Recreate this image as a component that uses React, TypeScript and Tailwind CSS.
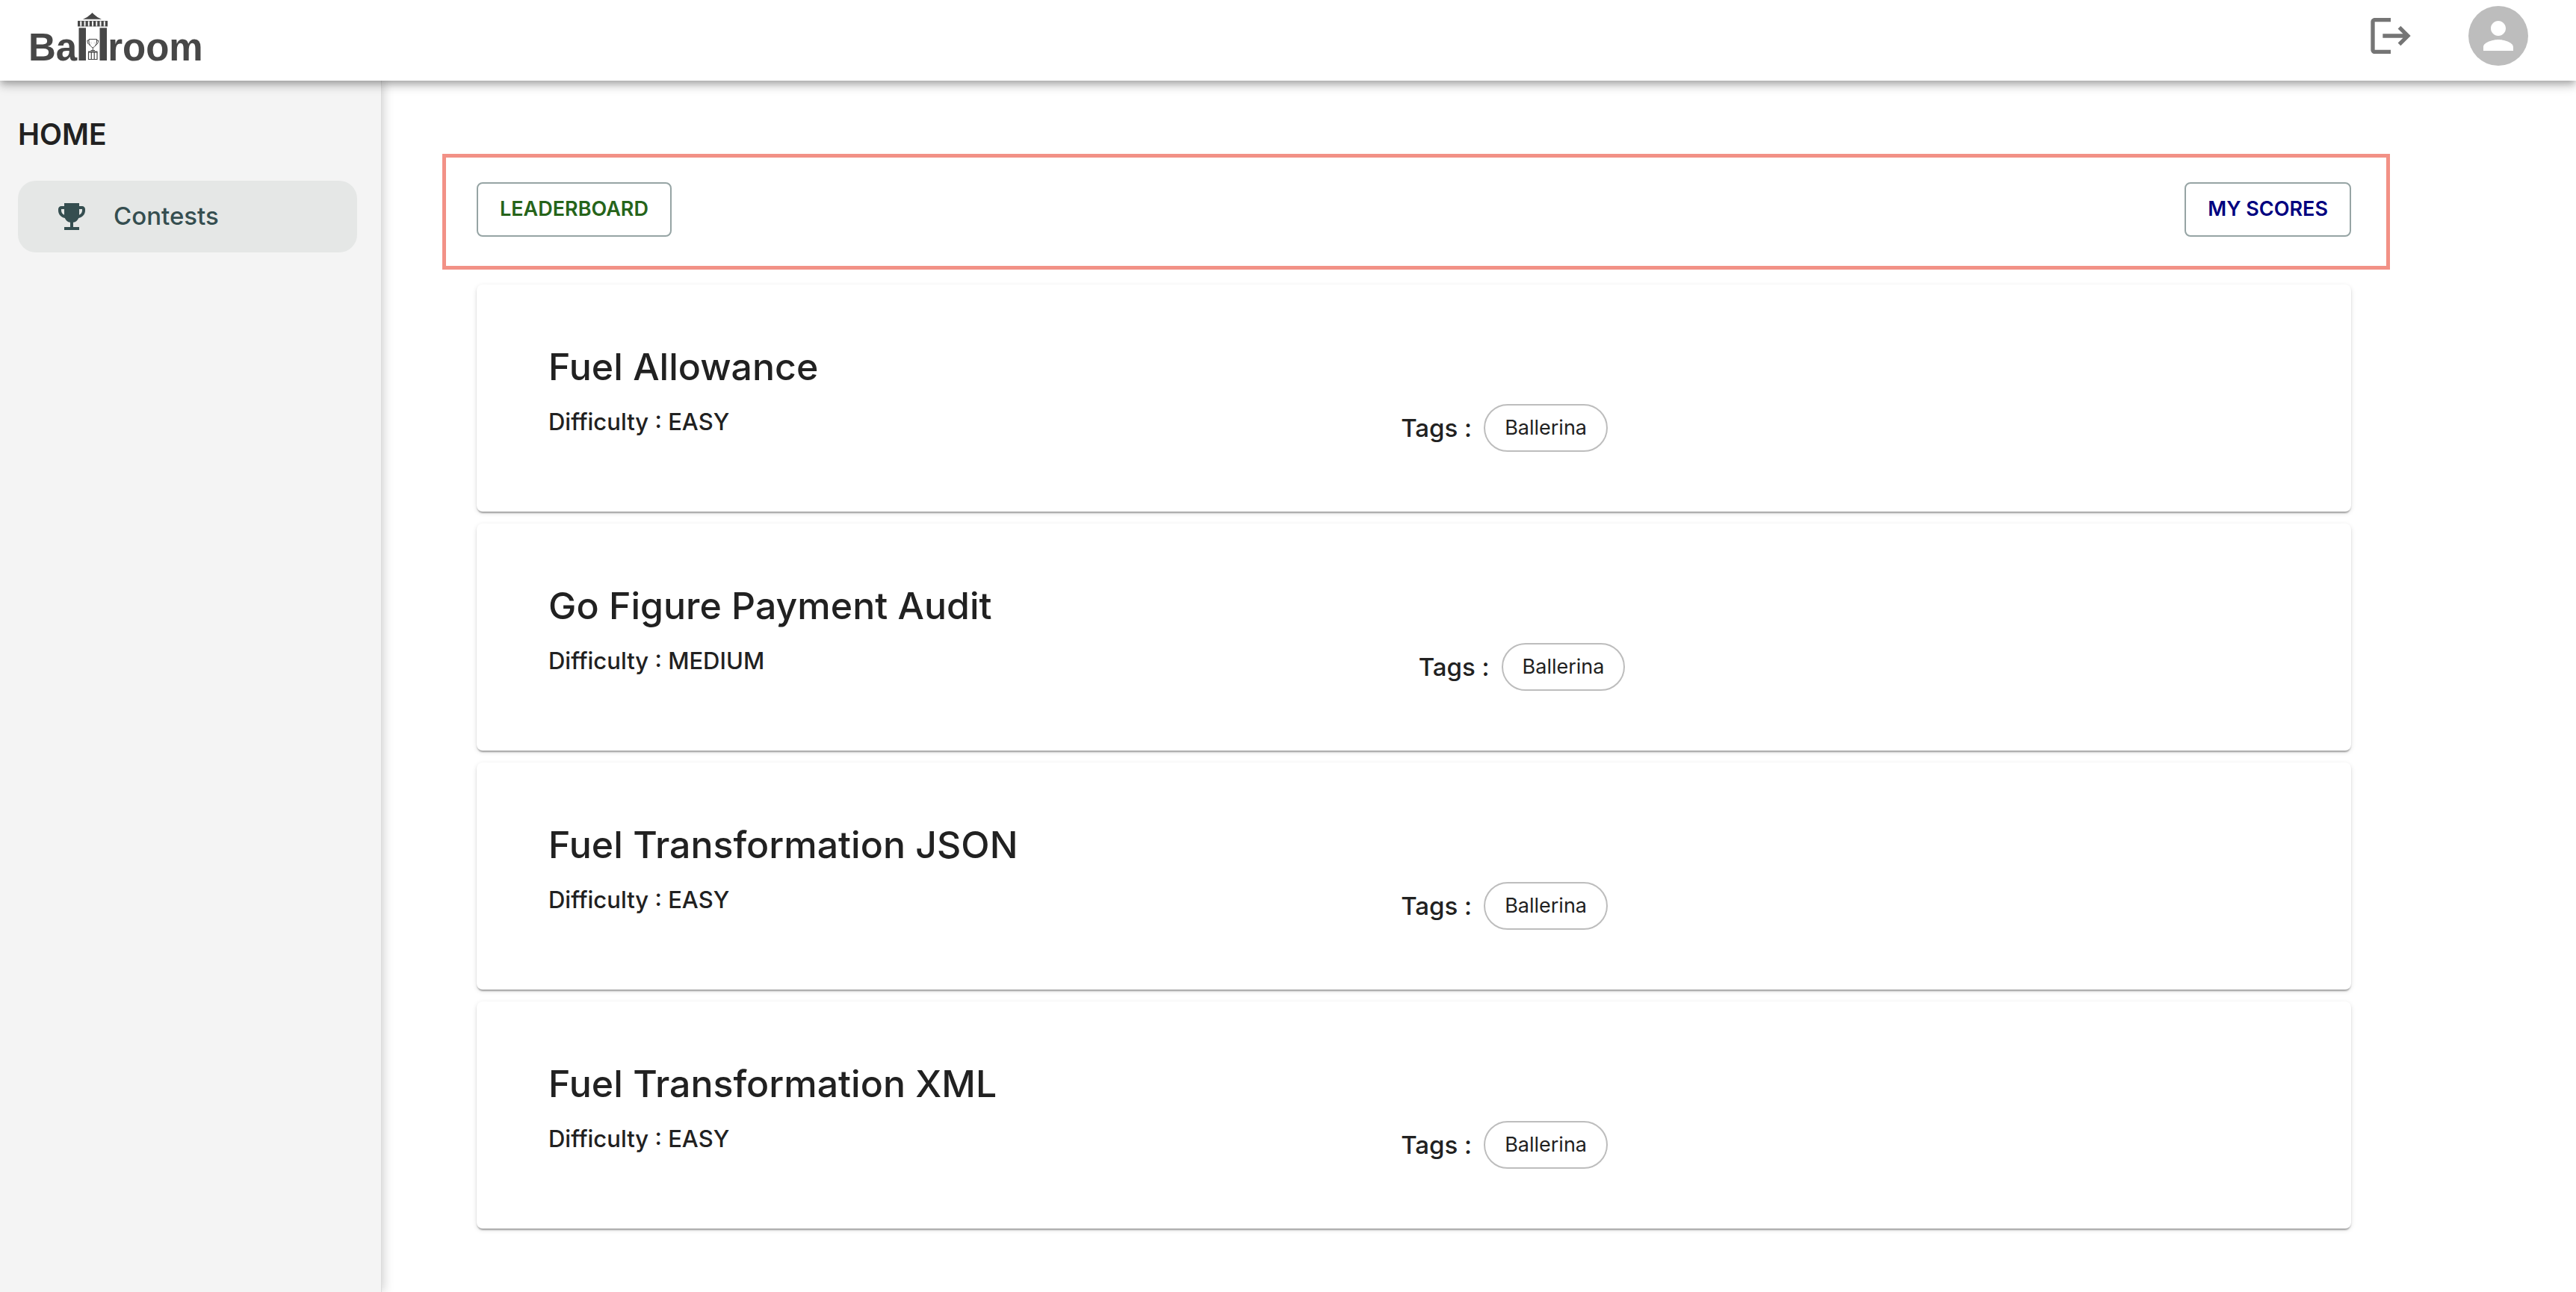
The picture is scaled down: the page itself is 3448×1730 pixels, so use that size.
import { MdEmojiEvents, MdLogout, MdPerson } from 'react-icons/md';

type Contest = { title: string; difficulty: string; tags: string[] };

const contests: Contest[] = [
  { title: 'Fuel Allowance', difficulty: 'EASY', tags: ['Ballerina'] },
  { title: 'Go Figure Payment Audit', difficulty: 'MEDIUM', tags: ['Ballerina'] },
  { title: 'Fuel Transformation JSON', difficulty: 'EASY', tags: ['Ballerina'] },
  { title: 'Fuel Transformation XML', difficulty: 'EASY', tags: ['Ballerina'] },
];

const crenels = [0, 1, 2, 3, 4, 5, 6, 7];

/* The two towers that stand for the "ll" of the logo, with a trophy between them. */
function Towers() {
  return (
    <svg viewBox="0 0 42 64" className="h-16 w-[42px] shrink-0" fill="#474747" aria-hidden="true">
      <path d="M20.500 0 L22.500 2 Q27 6.500 33 8.800 H8 Q14 6.500 18.500 2 Z" />
      {crenels.map((i) => (
        <rect key={i} x={1 + i * 5.25} y="11" width="3.300" height="7.300" />
      ))}
      <rect x="1" y="10.800" width="40" height="1" opacity="0.5" />
      <rect x="1" y="17.500" width="40" height="1" opacity="0.5" />
      <rect x="2.500" y="20.300" width="9.500" height="43.700" />
      <rect x="30.500" y="20.300" width="9.500" height="43.700" />
      <g fill="none" stroke="#474747" strokeWidth="1">
        <path d="M16 35.500 H26.500 V39 C26.500 43 24 45.500 21.300 47 C18.500 45.500 16 43 16 39 Z" />
        <path d="M16 37 H14 Q13.500 42 18 43.500 M26.500 37 H28.500 Q29 42 24.500 43.500" />
        <path d="M21.300 47 V50 M18.500 50.500 H24" />
        <path d="M19.500 39.500 L18.500 40.500 L19.500 41.500 M23 39.500 L24 40.500 L23 41.500" opacity="0.6" strokeWidth="0.600" />
      </g>
      <path d="M15 51.500 H27.500 V53.500 H15 Z" />
      <path
        d="M15.500 53 V62.500 H27 V53 M19.300 53 V62.500 M23.200 53 V62.500"
        fill="none"
        stroke="#474747"
        strokeWidth="1.200"
      />
    </svg>
  );
}

function Header() {
  return (
    <header className="relative z-10 flex h-[108px] items-start justify-between bg-white pr-16 pl-[38px] shadow-[0_4px_8px_-2px_rgba(0,0,0,0.2),0_8px_10px_0_rgba(0,0,0,0.14),0_2px_20px_0_rgba(0,0,0,0.12)]">
      <a
        href="#home"
        aria-label="Ballroom"
        className="flex items-baseline pt-[17px] font-['Liberation_Sans',Arial,sans-serif] text-[51px] leading-[44px] font-bold text-[#474747]"
      >
        <span>Ba</span>
        <Towers />
        <span className="-ml-px">room</span>
      </a>
      <div className="flex items-center gap-[72px] pt-2">
        <button type="button" aria-label="Log out" className="text-[#757575]">
          <MdLogout className="size-16" />
        </button>
        <button
          type="button"
          aria-label="Account"
          className="flex size-20 items-center justify-center rounded-full bg-[#bdbdbd] text-white"
        >
          <MdPerson className="size-[60px]" />
        </button>
      </div>
    </header>
  );
}

function Sidebar() {
  return (
    <aside className="w-[511px] shrink-0 border-r border-[#dcdcdc] bg-[#f4f4f4] px-6 pt-12 shadow-[2px_0_14px_rgba(0,0,0,0.2)]">
      <h2 className="text-[39px] leading-12 font-semibold">HOME</h2>
      <nav className="mt-[38px] mr-2">
        <a
          href="#contests"
          className="flex h-24 items-center gap-8 rounded-3xl bg-[#e5e7e6] pl-12 text-[33px] font-medium text-[#354e50]"
        >
          <MdEmojiEvents className="size-12" />
          Contests
        </a>
      </nav>
    </aside>
  );
}

function ContestCard({ title, difficulty, tags }: Contest) {
  return (
    <li className="rounded-lg bg-white px-24 py-20 shadow-[0_4px_2px_-2px_rgba(0,0,0,0.2),0_2px_2px_0_rgba(0,0,0,0.14),0_2px_6px_0_rgba(0,0,0,0.12)]">
      <h3 className="text-[50px] leading-[60px] font-medium">{title}</h3>
      <div className="mt-5 flex items-start justify-between">
        <p className="text-[31px] leading-12 font-medium">Difficulty : {difficulty}</p>
        <div className="flex items-center gap-4">
          <span className="text-[33px] leading-12 font-medium">Tags :</span>
          {tags.map((tag) => (
            <span
              key={tag}
              className="flex h-16 items-center rounded-full border-2 border-[#bdbdbd] px-[26px] text-[27px]"
            >
              {tag}
            </span>
          ))}
        </div>
        <span />
      </div>
    </li>
  );
}

export default function App() {
  const action =
    'h-[73px] rounded-lg border-2 border-[#96a4a4] px-[29px] text-[27px] font-semibold';
  return (
    <div className="flex min-h-screen flex-col bg-white font-[Inter,sans-serif] text-[#212121]">
      <Header />
      <div className="flex flex-1">
        <Sidebar />
        <main className="flex-1 pt-[98px] pr-[249px] pb-20 pl-[81px]">
          <div className="flex h-[155px] items-start justify-between border-[5px] border-[#f29186] pt-[33px] pr-[47px] pl-[41px]">
            <button type="button" className={`${action} text-[#26641a]`}>
              LEADERBOARD
            </button>
            <button type="button" className={`${action} text-[#00007f]`}>
              MY SCORES
            </button>
          </div>
          <ul className="mt-5 mr-[52px] ml-[46px] flex flex-col gap-4">
            {contests.map((contest) => (
              <ContestCard key={contest.title} {...contest} />
            ))}
          </ul>
        </main>
      </div>
    </div>
  );
}
